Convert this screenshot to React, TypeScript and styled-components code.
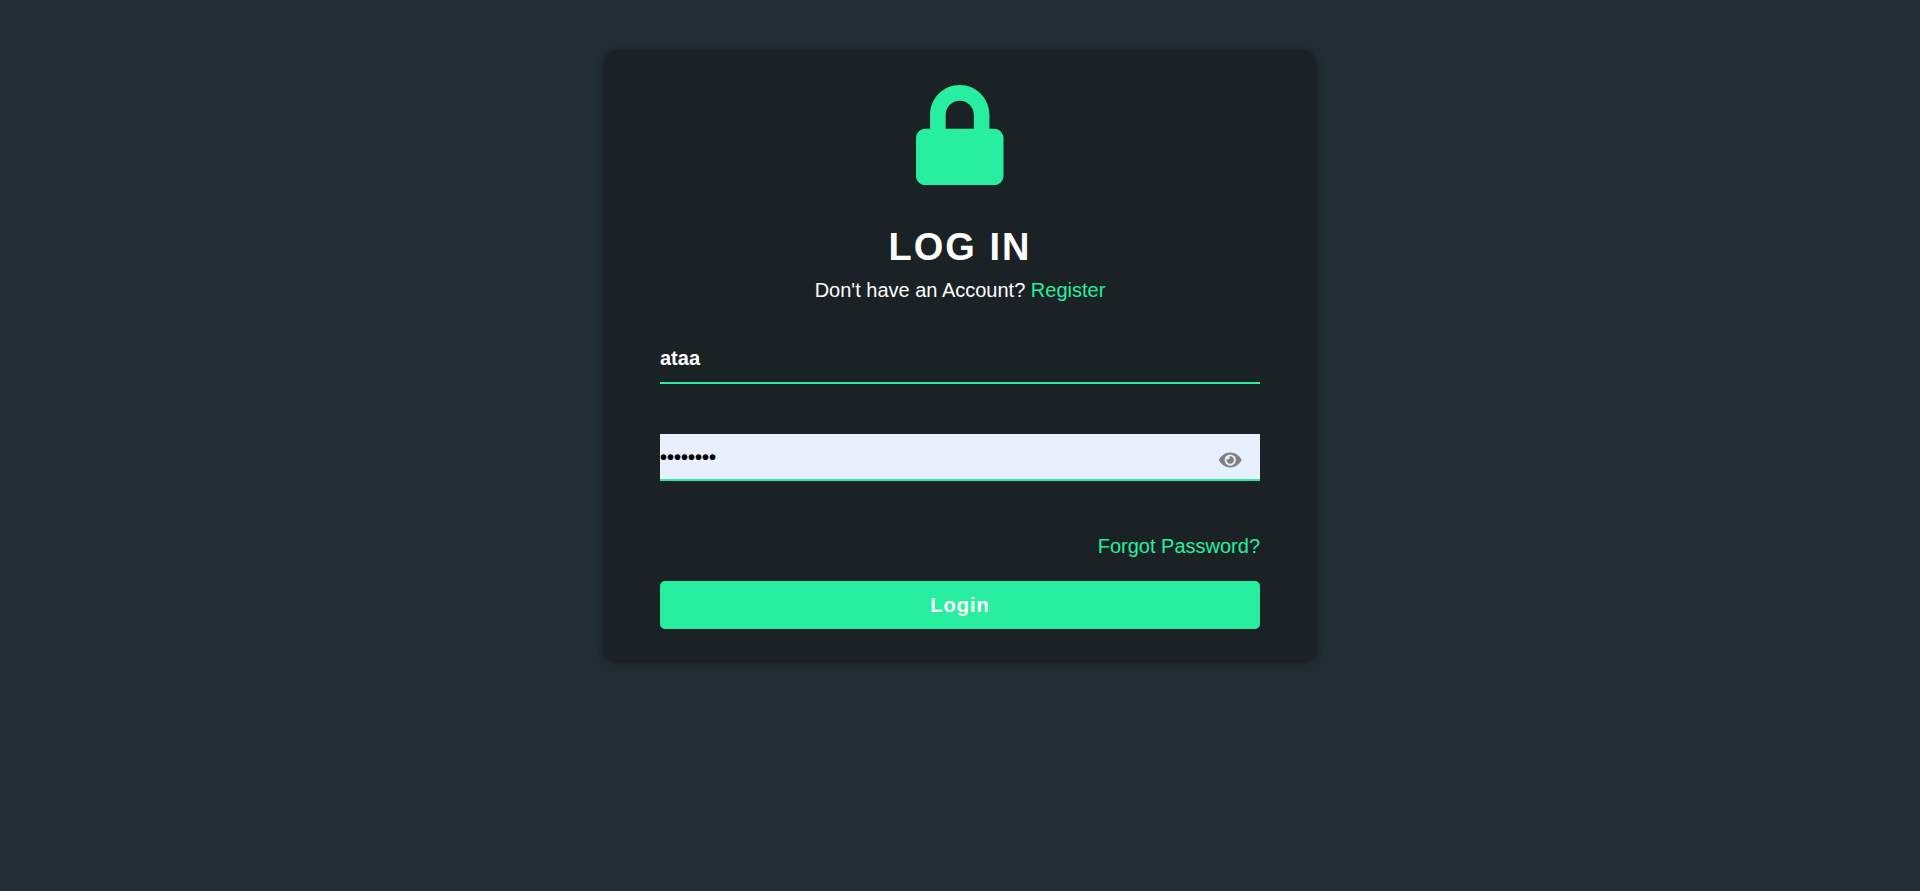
import React, { useState } from "react";
import styled, { createGlobalStyle } from "styled-components";

const GlobalStyle = createGlobalStyle`
  * { box-sizing: border-box; }
  body {
    margin: 0;
    min-height: 100vh;
    background: #222d32;
    font-family: Arial, "Liberation Sans", sans-serif;
    font-size: 20px;
  }
`;

const Page = styled.main`
  display: flex;
  justify-content: center;
  padding-top: 50px;
`;

const Card = styled.section`
  width: 712px;
  height: 610px;
  padding: 34.5px 56px 0;
  display: flex;
  flex-direction: column;
  background: #1a2226;
  border-radius: 12px;
  box-shadow: 0 3px 6px rgba(0, 0, 0, 0.16), 0 3px 6px rgba(0, 0, 0, 0.23);
`;

const LockIcon = styled.svg`
  width: 87.5px;
  height: 100px;
  margin: 0 auto;
  fill: #27ef9f;
`;

const Title = styled.h1`
  margin: 39.5px 0 0;
  height: 46px;
  line-height: 46px;
  text-align: center;
  font-size: 38px;
  font-weight: bold;
  letter-spacing: 2px;
  color: #fff;
`;

const Prompt = styled.p`
  margin: 5px 0 0;
  line-height: 30px;
  text-align: center;
  color: #fff;
`;

const Link = styled.a`
  color: #27ef9f;
  text-decoration: none;
`;

const Form = styled.form`
  display: flex;
  flex-direction: column;
  margin-top: 32px;
`;

const Field = styled.div<{ $filled?: boolean }>`
  display: flex;
  align-items: center;
  height: 47px;
  background: ${(p) => (p.$filled ? "#e8f0fe" : "transparent")};
  border-bottom: 2px solid #27ef9f;

  & + & { margin-top: 50px; }
`;

const Input = styled.input<{ $dark?: boolean }>`
  flex: 1;
  min-width: 0;
  height: 45px;
  padding: ${(p) => (p.$dark ? "1px 0 0" : "0 0 2px")};
  border: 0;
  outline: 0;
  background: transparent;
  font: bold 20px Arial, "Liberation Sans", sans-serif;
  color: ${(p) => (p.$dark ? "#000" : "#fff")};
`;

const EyeButton = styled.button`
  display: flex;
  padding: 0;
  margin: 6px 18.5px 0 0;
  border: 0;
  background: none;
  color: gray;

  svg { width: 22.5px; height: 20px; fill: currentColor; }
`;

const Forgot = styled(Link)`
  align-self: flex-end;
  margin-top: 50px;
  line-height: 30px;
`;

const Submit = styled.button`
  height: 48px;
  margin-top: 20px;
  padding: 0;
  border: 0;
  border-radius: 5px;
  background: #27ef9f;
  color: #fff;
  font: bold 20px Arial, "Liberation Sans", sans-serif;
  letter-spacing: 1px;
`;

export default function App() {
  const [user, setUser] = useState("ataa");
  const [password, setPassword] = useState("password");
  const [shown, setShown] = useState(false);

  return (
    <>
      <GlobalStyle />
      <Page>
        <Card>
          <LockIcon viewBox="0 0 448 512" aria-hidden="true">
            <path d="M400 224h-24v-72C376 68.2 307.8 0 224 0S72 68.2 72 152v72H48c-26.5 0-48 21.5-48 48v192c0 26.5 21.5 48 48 48h352c26.5 0 48-21.5 48-48V272c0-26.5-21.5-48-48-48zm-104 0H152v-72c0-39.7 32.3-72 72-72s72 32.3 72 72v72z" />
          </LockIcon>
          <Title>LOG IN</Title>
          <Prompt>
            Don't have an Account? <Link href="#">Register</Link>
          </Prompt>
          <Form onSubmit={(e) => e.preventDefault()}>
            <Field>
              <Input value={user} onChange={(e) => setUser(e.target.value)} />
            </Field>
            <Field $filled>
              <Input
                $dark
                type={shown ? "text" : "password"}
                value={password}
                onChange={(e) => setPassword(e.target.value)}
              />
              <EyeButton type="button" onClick={() => setShown(!shown)}>
                <svg viewBox="0 0 576 512">
                  <path d="M572.52 241.4C518.29 135.59 410.93 64 288 64S57.68 135.64 3.48 241.41a32.35 32.35 0 0 0 0 29.19C57.71 376.41 165.07 448 288 448s230.32-71.64 284.52-177.41a32.35 32.35 0 0 0 0-29.19zM288 400a144 144 0 1 1 144-144 143.93 143.93 0 0 1-144 144zm0-240a95.31 95.31 0 0 0-25.31 3.79 47.85 47.85 0 0 1-66.9 66.9A95.78 95.78 0 1 0 288 160z" />
                </svg>
              </EyeButton>
            </Field>
            <Forgot href="#">Forgot Password?</Forgot>
            <Submit type="submit">Login</Submit>
          </Form>
        </Card>
      </Page>
    </>
  );
}
